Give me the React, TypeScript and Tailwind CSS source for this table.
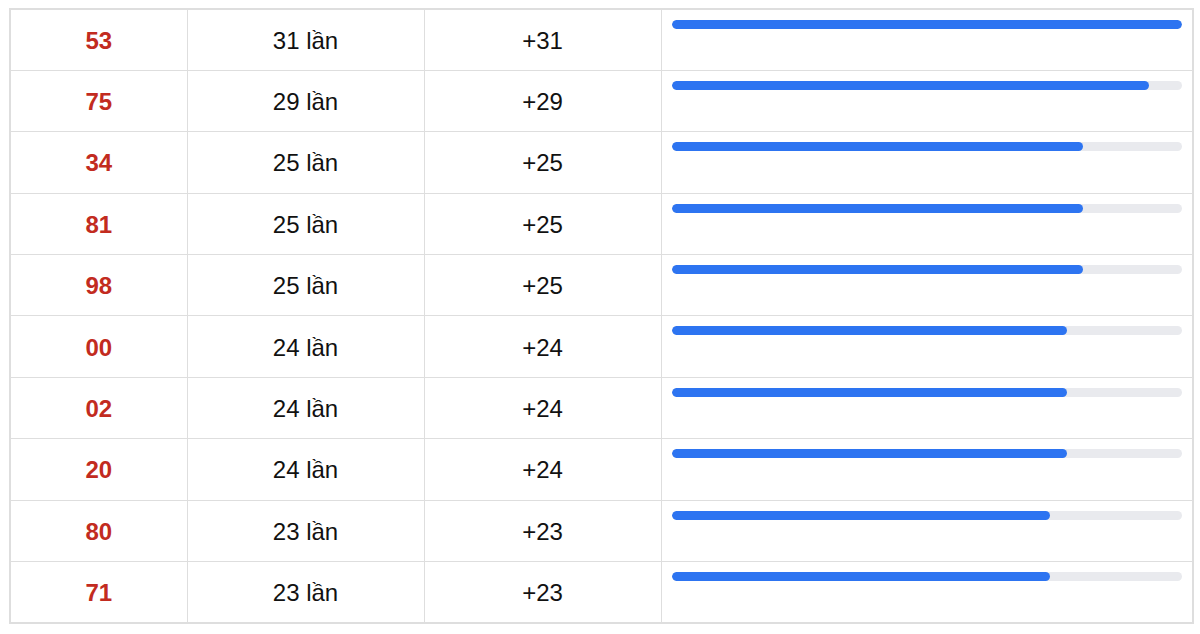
import React from "react";

const rows: [string, number][] = [
  ["53", 31],
  ["75", 29],
  ["34", 25],
  ["81", 25],
  ["98", 25],
  ["00", 24],
  ["02", 24],
  ["20", 24],
  ["80", 23],
  ["71", 23],
];

export default function App() {
  const max = 31;
  return (
    <div className="w-[1200px] h-[634px] bg-white pt-[8px] pl-[9px]" style={{ fontFamily: '"Liberation Sans", Arial, sans-serif' }}>
      <table className="border-collapse border-2 border-[#dedede] w-[1185px] table-fixed">
        <colgroup>
          <col className="w-[177px]" />
          <col className="w-[237px]" />
          <col className="w-[237px]" />
          <col />
        </colgroup>
        <tbody>
          {rows.map(([n, c]) => (
            <tr key={n} className="h-[61.4px]">
              <td className="border border-[#dedede] text-center align-middle text-[24px] font-bold text-[#c22b20] pt-[2px]">{n}</td>
              <td className="border border-[#dedede] text-center align-middle text-[24px] text-[#111] pt-[2px]">{c} lần</td>
              <td className="border border-[#dedede] text-center align-middle text-[24px] text-[#111] pt-[2px]">+{c}</td>
              <td className="border border-[#dedede] align-top px-[10px] pt-[10px]">
                <div className="h-[9px] w-full rounded-full bg-[#e9eaee] overflow-hidden">
                  <div className="h-full rounded-full bg-[#2d74f1]" style={{ width: `${(c / max) * 100}%` }} />
                </div>
              </td>
            </tr>
          ))}
        </tbody>
      </table>
    </div>
  );
}
